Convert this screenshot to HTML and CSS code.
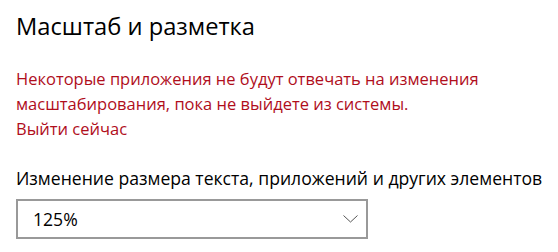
FILE: index.html
```html
<!DOCTYPE html>
<html lang="ru"><head><meta charset="utf-8"><link rel="stylesheet" href="styles.css"></head>
<body>
<main class="page">
  <h1 class="title">Масштаб и разметка</h1>
  <p class="warning">Некоторые приложения не будут отвечать на изменения масштабирования, пока не выйдете из системы. <a class="signout" href="#">Выйти сейчас</a></p>
  <div class="field">
    <div class="label">Изменение размера текста, приложений и других элементов</div>
    <div class="select">
      <span class="value">125%</span>
      <svg class="chevron" width="15" height="8" viewBox="0 0 15 8"><polyline points="0.5,0.5 7.5,7 14.5,0.5" fill="none" stroke="#555" stroke-width="1"/></svg>
    </div>
  </div>
</main>
</body></html>
```
FILE: styles.css
```css
html,body{margin:0;padding:0;background:#fff;}
body{font-family:"Segoe UI","Open Sans","Noto Sans",sans-serif;color:#000;}
.page{padding:0 0 0 16px;display:flex;flex-direction:column;}
.title{font-size:23.7px;font-weight:400;line-height:36px;margin:8px 0 0 0;}
.warning{font-size:16.5px;line-height:25px;color:#b00e1c;margin:22px 0 0 0;max-width:500px;}
.signout{display:block;color:#b00e1c;text-decoration:none;}
.field{margin-top:25px;display:flex;flex-direction:column;}
.label{font-size:17.6px;line-height:25px;white-space:nowrap;}
.select{margin-top:8px;width:325px;height:36px;border:2px solid #999;display:flex;align-items:center;justify-content:space-between;padding:0 8px 0 15px;}
.value{font-size:17.6px;line-height:25px;}
.chevron{display:block;}
```
